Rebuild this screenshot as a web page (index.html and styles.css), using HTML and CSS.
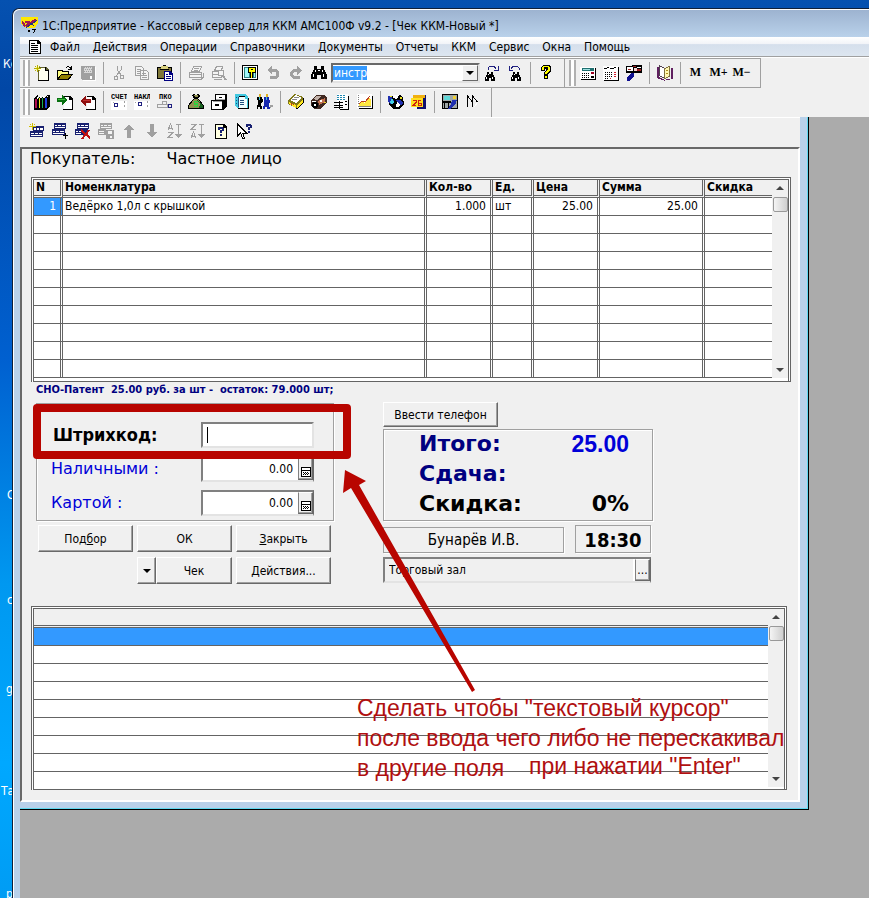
FILE: index.html
```html
<!DOCTYPE html>
<html lang="ru">
<head>
<meta charset="utf-8">
<title>1С:Предприятие - Кассовый сервер</title>
<link rel="stylesheet" href="styles.css">
</head>
<body>
<div class="desktop" aria-hidden="true">
  <span class="shortcut s1">Ко</span><span class="shortcut s2">С</span><span class="shortcut s3">с</span>
  <span class="shortcut s4">g</span><span class="shortcut s5">Та</span><span class="shortcut s6">р</span>
</div>
<div class="app">
  <header class="titlebar">
    <svg class="logo" viewBox="0 0 16 16"><path fill="#ffe800" d="M0 0h16v6l-3 4H5l-5-4z"/><path fill="none" stroke="#a01850" stroke-width="2" d="M1 4l3 5M4 5h3l-2 4 9-7"/><path fill="none" stroke="#203080" d="M5 10l10-7M9 6l3 2"/><path d="M7 12h1v2H7zM10 11h4v1l-2 3h-1l2-3h-3z"/></svg>
    <h1>1С:Предприятие - Кассовый сервер для ККМ АМС100Ф v9.2 - [Чек ККМ-Новый *]</h1>
  </header>
  <nav class="menu">
    <svg class="doc" viewBox="0 0 12 14"><path d="M0 0h9l3 3v11H0z"/><path fill="#fff" d="M1 1h7v3h3v9H1z"/><path d="M2 3h4v1H2zM2 5h7v1H2zM2 7h7v1H2zM2 9h7v1H2zM2 11h7v1H2z"/></svg>
    <a href="#">Файл</a><a href="#">Действия</a><a href="#">Операции</a><a href="#">Справочники</a><a href="#">Документы</a><a href="#">Отчеты</a><a href="#">ККМ</a><a href="#">Сервис</a><a href="#">Окна</a><a href="#">Помощь</a>
  </nav>
  <div class="toolbars">
    <div class="bar-row">
      <div class="bar">
        <i class="grip"></i>
        <button aria-label="Новый"><svg viewBox="0 0 16 16"><path fill="#606030" d="M4 2h8l3 3v10H4z"/><path d="M14 5h1v11H4v-1h10z"/><path fill="#fffff0" d="M5 3h6v3h3v9H5z"/><path fill="#b8b000" d="M3 0h1v7H3zM0 3h7v1H0zM1 1h1v1H1zM5 1h1v1H5zM1 5h1v1H1zM5 5h1v1H5z"/><path fill="#ffff60" d="M2 2h1v1H2zM4 2h1v1H4zM2 4h1v1H2zM4 4h1v1H4z"/><path d="M11 2h1v3h3v1h-4z"/></svg></button>
        <button aria-label="Открыть"><svg viewBox="0 0 16 16"><path d="M0 5h5l1 1h6v3h4l-4 6H0z"/><path fill="#ffff80" d="M1 6h3l1 1h6v2H4l-3 4z"/><path fill="#908000" d="M4 10h10l-3 4H2z"/><path fill="none" stroke="#000" d="M9 3c1-2 4-2 5 1M14 1v3h-3"/></svg></button>
        <button aria-label="Сохранить"><svg viewBox="0 0 16 16"><path fill="#a0a0a0" d="M1 1h14v14H2l-1-1z"/><path fill="#d8d8d8" d="M4 2h8v6H4z"/><path fill="#a0a0a0" d="M4 2h1v1H4zM6 2h1v1H6zM8 2h1v1H8zM10 2h1v1h-1zM5 4h1v1H5zM7 4h1v1H7zM9 4h1v1H9zM11 4h1v1h-1zM4 6h1v1H4zM6 6h1v1H6zM8 6h1v1H8zM10 6h1v1h-1z"/><path fill="#fff" d="M10 11h2v3h-2zM15 2h1v14H3v-1h12z"/></svg></button>
        <i class="sep"></i>
        <button aria-label="Вырезать"><svg viewBox="0 0 16 16"><path fill="none" stroke="#a0a0a0" d="M6 1v4l5 6M10 1v4l-5 6"/><circle cx="5" cy="13" r="2" fill="none" stroke="#a0a0a0"/><circle cx="11" cy="12" r="2" fill="none" stroke="#a0a0a0"/></svg></button>
        <button aria-label="Копировать"><svg viewBox="0 0 16 16"><path fill="#f4f4f4" stroke="#a0a0a0" d="M1.500 1.500h6l2 2v7h-8zM6.500 5.500h6l2 2v7h-8z"/><path fill="#a0a0a0" d="M3 4h4v1H3zM3 6h3v1H3zM3 8h3v1H3zM8 8h4v1H8zM8 10h5v1H8zM8 12h5v1H8z"/></svg></button>
        <button aria-label="Вставить"><svg viewBox="0 0 16 16"><path d="M0 2h15v12H0z"/><path fill="#807838" d="M1 3h13v10H1z"/><path fill="#d8d080" d="M4 1h7v3H4z"/><path d="M3 4h9v1H3zM6 0h3v1H6z"/><path fill="#000080" d="M7 6h6l3 3v7H7z"/><path fill="#fff" d="M8 7h4v3h3v5H8z"/><path fill="#000080" d="M9 9h2v1H9zM9 11h5v1H9zM9 13h5v1H9z"/></svg></button>
        <i class="sep"></i>
        <button aria-label="Печать"><svg viewBox="0 0 16 16"><path fill="#f4f4f4" stroke="#a0a0a0" d="M5.500 1.500h8l-2 5h-8zM1.500 7.500h12v5h-12z"/><path fill="none" stroke="#a0a0a0" d="M2 9.500h11M4 14.500h9l2-2v-5M6 3.500h5M6 5.500h4"/></svg></button>
        <button aria-label="Просмотр"><svg viewBox="0 0 16 16"><path fill="#f4f4f4" stroke="#a0a0a0" d="M5.500 1.500h6l-1 4h-7zM1.500 6.500h9v6h-9z"/><path fill="none" stroke="#a0a0a0" stroke-width="2" d="M12 11l3 4"/><circle cx="10" cy="8" r="3" fill="#f4f4f4" stroke="#a0a0a0"/><path stroke="#a0a0a0" d="M2 9.500h5M3 14.500h8"/></svg></button>
        <i class="sep"></i>
        <button aria-label="Параметры"><svg viewBox="0 0 16 16"><path d="M0 0h16v15H0z"/><path fill="#fff" d="M1 1h14v13H1z"/><path fill="#308080" d="M2 2h12v11H2z"/><path fill="#a0f8f8" d="M3 3h4v9H3zM12 8h1v4h-1z"/><path d="M6 2h8v6h-3v5H8V8H6z"/><path fill="#ffff00" d="M7 3h6v4h-3v6H9V7H7z"/><path d="M9 4h2v1H9z"/></svg></button>
        <button aria-label="Отменить"><svg viewBox="0 0 16 16"><path fill="#a0a0a0" d="M2 5l5-4v3h4l3 3v4l-3 3H5v-3h5l1-1V8l-1-1H7v3z"/></svg></button>
        <button aria-label="Вернуть"><svg viewBox="0 0 16 16"><path fill="#a0a0a0" d="M14 5L9 1v3H5L2 7v4l3 3h7v-3H6l-1-1V8l1-1h3v3z"/></svg></button>
        <button aria-label="Найти"><svg viewBox="0 0 16 16"><path d="M3 1h3v3h4V1h3v3l3 6v4h-6v-4H6v4H0v-4l3-6z"/><path fill="#fff" d="M4 5h1v2H4zM2 9h1v3H2zM11 5h1v2h-1zM12 9h1v3h-1zM7 5h2v1H7z"/></svg></button>
        <div class="combo"><input aria-label="Поиск" value="инстр"><button aria-label="Список"><i class="tri"></i></button></div>
        <button aria-label="Найти далее"><svg viewBox="0 0 16 16"><path d="M3 7h2v2h2V7h2v2l2 4v3H7v-3H5v3H1v-3l2-4z"/><path fill="#fff" d="M2 12h1v2H2zM8 12h1v2H8zM4 9h1v1H4z"/><path fill="none" stroke="#202080" d="M4 5V3l2-2h4l2 3M14 1v4h-4"/></svg></button>
        <button aria-label="Найти ранее"><svg viewBox="0 0 16 16"><path d="M6 7h2v2h2V7h2v2l2 4v3h-4v-3H8v3H4v-3l2-4z"/><path fill="#fff" d="M5 12h1v2H5zM11 12h1v2h-1zM7 9h1v1H7z"/><path fill="none" stroke="#202080" d="M12 5V3l-2-2H6L4 4M2 1v4h4"/></svg></button>
        <i class="sep"></i>
        <button aria-label="Справка"><svg viewBox="0 0 16 16"><path d="M5 0h6l2 2v4l-3 3v1H6V7l2-2V4H7v2H3V2zM6 10h4v4H6z"/><path fill="#ffff00" d="M5 1h5l2 2v2L9 8v1H7V7l3-3V3L9 2H6v3H4V2zM7 11h2v2H7z"/></svg></button>
      </div>
      <div class="bar bar-right">
        <i class="grip"></i>
        <button aria-label="Калькулятор"><svg viewBox="0 0 16 16"><path d="M1 3h15v12H1z"/><path fill="#fff" d="M0 2h15v12H0z"/><path fill="#207070" d="M2 3h12v3H2z"/><path fill="#a0e0e0" d="M3 4h7v1H3z"/><path d="M2 8h1v1H2zM4 8h1v1H4zM6 8h1v1H6zM8 8h1v1H8zM2 10h1v1H2zM4 10h1v1H4zM6 10h1v1H6zM8 10h1v1H8zM2 12h1v1H2zM4 12h1v1H4zM6 12h1v1H6zM8 12h1v1H8zM11 11h3v2h-3z"/><path fill="#a00020" d="M11 7h3v2h-3z"/></svg></button>
        <button aria-label="Календарь"><svg viewBox="0 0 16 16"><path d="M1 2h15v14H1z"/><path fill="#fff" d="M0 1h15v14H0z"/><path d="M1 3h3v1H1zM7 3h4v1H7zM4 2h2v1H4zM11 2h2v1h-2zM2 7h1v1H2zM4 7h1v1H4zM6 7h1v1H6zM8 7h1v1H8zM2 9h1v1H2zM4 9h1v1H4zM6 9h1v1H6zM8 9h1v1H8zM2 11h1v1H2zM4 11h1v1H4zM6 11h1v1H6zM8 11h1v1H8zM2 13h1v1H2zM4 13h1v1H4z"/><path fill="#d02030" d="M11 7h2v1h-2zM11 9h2v1h-2zM11 11h2v1h-2zM7 13h1v1H7z"/></svg></button>
        <button aria-label="Табло"><svg viewBox="0 0 16 16"><path d="M0 1h5l2-1h9v8H0z"/><path fill="#fff" d="M1 2h6v4H1zM11 2h4v1h-4z"/><path fill="#a02020" d="M2 4h3v1H2zM10 4h5v2h-5zM7 1h3v1H7z"/><path fill="#f8d0d0" d="M8 3h3v3H8z"/><path fill="#101090" d="M5 8h3v3l-5 5H1v-3z"/></svg></button>
        <i class="sep"></i>
        <button aria-label="Описание"><svg viewBox="0 0 16 16"><path fill="#602060" d="M0 2h2v10l6 3v1L0 13zM14 3h2v11l-7 1v-1h5z"/><path fill="#fff" stroke="#504050" d="M2.500.5l5 3v10l-5-3z"/><path fill="#fff8b0" stroke="#807040" d="M7.500 3.500l5-2v10l-5 2z"/><path fill="#b09020" d="M9 5h2v1H9zM9 8h2v1H9z"/></svg></button>
        <i class="sep"></i>
        <button class="mem">M</button><button class="mem">M+</button><button class="mem">M−</button>
      </div>
    </div>
    <div class="bar-row second">
      <div class="bar">
        <i class="grip"></i>
        <button aria-label="Журналы"><svg viewBox="0 0 16 16"><path d="M0 4l4-3v3l3-3v3l3-3v3l4-3h2v11l-3 4H0z"/><path fill="#b01050" d="M1 5h2v9H1z"/><path fill="#f0e820" d="M5 4h1v10H5z"/><path fill="#18b050" d="M8 4h1v10H8z"/><path fill="#2040e0" d="M11 4h2v10h-2z"/><path fill="#fff" d="M3 3h1v2H3zM6 2h1v2H6zM9 2h1v2H9zM13 2h1v1h-1z"/></svg></button>
        <button aria-label="Приход"><svg viewBox="0 0 16 16"><path d="M7 2h6l3 3v11H6v-1h9V6h-3V3H7z"/><path fill="#fff" d="M7 3h5v3h3v9H7z"/><path fill="#087010" d="M0 4h5V1l6 5-6 5V8H0z"/><path fill="#40c040" d="M1 5h7v1H1z"/></svg></button>
        <button aria-label="Расход"><svg viewBox="0 0 16 16"><path d="M7 2h6l3 3v11H6v-1h9V6h-3V3H7z"/><path fill="#fff" d="M7 3h5v3h3v9H7z"/><path fill="#901010" d="M11 5H6V2L0 7l6 5V9h5z"/><path fill="#c03030" d="M3 6h7v1H3z"/></svg></button>
        <i class="sep"></i>
        <button aria-label="Счет"><svg viewBox="0 0 16 16"><path fill="#fff" d="M0 7h16v9H0z"/><text class="tag" x="0" y="5">СЧЕТ</text><circle cx="5" cy="11" r="2" fill="none" stroke="#202080"/><path fill="#a0a0a0" d="M2 8h1v1H2zM13 7h1v2h-1zM13 11h1v2h-1z"/></svg></button>
        <button aria-label="Накладная"><svg viewBox="0 0 16 16"><path fill="#fff" d="M0 7h16v9H0z"/><text class="tag" x="0" y="5">НАКЛ</text><circle cx="6" cy="10" r="2" fill="none" stroke="#202080"/><path fill="#a0a0a0" d="M1 8h1v1H1zM13 7h1v2h-1zM13 11h1v2h-1z"/></svg></button>
        <button aria-label="ПКО"><svg viewBox="0 0 16 16"><text class="tag" x="2" y="5">ПКО</text><path fill="none" stroke="#a0a0a0" d="M5 10V7h4v3M0 13.500h10v-3H0z"/><circle cx="13" cy="12" r="2" fill="none" stroke="#202080"/></svg></button>
        <i class="sep"></i>
        <button aria-label="Касса"><svg viewBox="0 0 16 16"><path d="M4 1l2-1 2 1 2-1 2 2-2 3 3 2 3 5v3H0v-3l3-5 3-2z"/><path fill="#909050" d="M5 1h5v2H7zM6 5h3l3 3 3 4v2H1v-2l3-4z"/><path fill="#186020" d="M9 6l3 2 3 4v2h-4l1-4z"/><path fill="#30d040" d="M6 7h4v1H7v1h3v4H6v-1h3v-1H6z"/></svg></button>
        <button aria-label="Картотека"><svg viewBox="0 0 16 16"><path d="M4 0h12v12l-3 4H0V6h4z"/><path fill="#fff" d="M5 1h9v5H5zM1 7h10v8H1z"/><path fill="#a0a0a0" d="M2 7h9v1H2zM5 5h9v1H5z"/><path d="M8 3h3v1H8zM4 10h4v2H4z"/></svg></button>
        <button aria-label="Документ"><svg viewBox="0 0 16 16"><path fill="#40c8e0" d="M1 0h10l3 3v11H3l-2-2z"/><path fill="#000" d="M14 4h1v11H4v-1h10zM5 2h6v1H5z"/><path fill="#f0ffff" d="M5 3h6v2h2v9H5z"/><path fill="#205080" d="M4 3h1v10H4zM2 3h1v1H2zM2 6h1v1H2zM2 9h1v1H2zM6 6h4v1H6zM6 8h4v1H6zM6 10h4v1H6z"/></svg></button>
        <button aria-label="Контрагенты"><svg viewBox="0 0 16 16"><path fill="#e0b020" d="M2 0h2v3H2zM9 0h2v3H9z"/><path d="M0 3h5l1 4-2 2 1 6H3l-1-4-1 4H0l1-7z"/><path fill="#1828b0" d="M7 3h5l1 5-1 3 1 4h-3l-1-4-1 4H6l1-6z"/><path fill="#fff" d="M6 5h1v3H6z"/><path fill="#40c0d0" d="M2 3h1v3H2zM9 3h1v3H9z"/><path fill="#a0a0a0" d="M13 11h3v2h-2v1h-1z"/></svg></button>
        <i class="sep"></i>
        <button aria-label="Картотека товаров"><svg viewBox="0 0 16 16"><path d="M13 5l3-1v4l-7 7-2-1z"/><path fill="#807818" d="M0 6l7-6 8 3v4l-7 7-8-4z"/><path fill="#fff" d="M2 6l6-5 6 3-6 5z"/><path fill="#ffe820" d="M1 8l7 3v3l-7-4zM9 11l6-6v3l-6 6z"/><path fill="#888" d="M4 5h5v1H4zM6 3h5v1H6z"/><path fill="#c03020" d="M3 9h1v2H3zM4 11h1v-1h1v1z"/></svg></button>
        <button aria-label="Товары"><svg viewBox="0 0 16 16"><path fill="#402820" d="M0 6l6-5h7l3 3v5l-4 3-3 3H3l-3-3z"/><path fill="#c0b0a8" d="M2 5l4-3h5L6 6z"/><path fill="#c07050" d="M7 7l7-3v4l-6 3z"/><path fill="#fff" d="M1 7h4v1H1zM9 6h2v2H9z"/><circle cx="4" cy="11" r="3"/><circle cx="4" cy="11" r="1" fill="#fff"/><path fill="#e8d020" d="M13 8h2v1h-2z"/></svg></button>
        <button aria-label="Отчет"><svg viewBox="0 0 16 16"><path d="M14 2h1v14H6v-1h8z"/><path fill="#fff" d="M3 0h11v15H3z"/><path fill="#2088b0" d="M3 1h2v1H3zM6 1h2v1H6zM9 1h2v1H9zM3 3h2v1H3zM6 3h2v1H6zM9 3h2v1H9zM3 5h2v1H3zM6 5h2v1H6zM9 5h2v1H9z"/><path d="M0 8h9v1H0zM0 11h9v1H0zM0 13h9v1H0zM5 7h1v8H5zM11 7h2v1h-2zM11 10h2v1h-2z"/></svg></button>
        <button aria-label="Диаграмма"><svg viewBox="0 0 16 16"><path d="M2 2h14v13H2z"/><path fill="#fff" d="M0 0h15v14H0z"/><path fill="#ffe840" d="M2 10l3-2 3 1 4-5 2 1v8H2z"/><path fill="none" stroke="#c04020" d="M2 10l3-3 3 1 5-6"/><path fill="#808080" d="M1 1h1v1H1zM1 3h1v1H1zM1 5h1v1H1zM1 7h1v1H1zM1 9h1v1H1zM1 12h13v1H1z"/></svg></button>
        <i class="sep"></i>
        <button aria-label="Интернет"><svg viewBox="0 0 16 16"><path d="M5 1h7l3 3 1 6-4 5H5l-4-4V5z"/><path fill="#fff" d="M5 1h6l-2 4-4-1zM9 8l4 1-2 4H8z"/><path fill="#2030b0" d="M0 2h3l3 5-3 4-3-3zM7 6h5l3 3-2 3-4-4z"/><path fill="#40d0e8" d="M3 5h2l1 3-2 3-2-2z"/><path fill="#e8e020" d="M12 3h2v2h-2zM2 2h2v1H2z"/></svg></button>
        <button aria-label="Дата"><svg viewBox="0 0 16 16"><path fill="#101070" d="M3 1h12v14H6v-2H3z"/><path fill="#ffe020" d="M0 4h12v9H0z"/><path fill="#f0b010" d="M2 1h12v3H2z"/><path fill="none" stroke="#d02010" d="M2 6.500h3v2l-3 3h3M10 6.500H7.500v5H10v-2H8"/></svg></button>
        <i class="sep"></i>
        <button aria-label="Рабочее место"><svg viewBox="0 0 16 16"><path d="M0 0h16v15H0z"/><path fill="#a0a8a8" d="M1 1h14v13H1z"/><path fill="#60d8d8" d="M2 2h6v4H2z"/><path d="M0 7h9v2H0zM2 9h1v6H2zM6 9h1v5H6z"/><path fill="#2030b0" d="M10 6h5l-2 5-5 4H6l3-5z"/><path fill="#f0d030" d="M11 2h3v3h-3z"/></svg></button>
        <button aria-label="Далее"><svg viewBox="0 0 16 16"><path fill="none" stroke="#000" d="M2.500 13V2l5 6M7.500 13V2l5 6"/><path fill="none" stroke="#fff" d="M13 8l-4 5"/></svg></button>
      </div>
    </div>
  </div>

  <main class="mdi">
    <section class="child">
      <div class="child-tools">
        <button aria-label="Новая строка"><svg viewBox="0 0 16 16"><path fill="#182070" d="M4 3h11v5H4zM1 8h13v6H1z"/><path fill="#fff" d="M5 5h2v2H5zM8 5h2v2H8zM11 5h3v2h-3zM2 10h3v1H2zM6 10h3v1H6zM10 10h3v1h-3zM2 12h11v1H2z"/><path fill="#d0c000" d="M0 3h7v1H0zM3 0h1v7H3zM1 1h1v1H1zM5 1h1v1H5z"/></svg></button>
        <button aria-label="Добавить строку"><svg viewBox="0 0 16 16"><path fill="#182070" d="M2 0h12v6H2zM0 6h13v6H0z"/><path fill="#fff" d="M3 2h2v1H3zM6 2h3v1H6zM10 2h3v1h-3zM3 4h10v1H3zM1 8h2v1H1zM4 8h3v1H4zM8 8h4v1H8zM1 10h11v1H1z"/><path d="M13 10h1v6h-1zM11 12h5v1h-5z"/></svg></button>
        <button aria-label="Удалить строку"><svg viewBox="0 0 16 16"><path fill="#182070" d="M2 0h12v6H2zM0 6h13v6H0z"/><path fill="#fff" d="M3 2h2v1H3zM6 2h3v1H6zM10 2h3v1h-3zM3 4h10v1H3zM1 8h2v1H1zM4 8h3v1H4zM1 10h5v1H1z"/><path fill="none" stroke="#c01010" stroke-width="2" d="M6 7l9 8M14 7l-7 9"/></svg></button>
        <button aria-label="Записать строку"><svg viewBox="0 0 16 16"><path fill="#a0a0a0" d="M2 0h12v6H2zM0 6h8v6H0zM8 7h8v9H8z"/><path fill="#f4f4f4" d="M3 2h2v1H3zM6 2h3v1H6zM10 2h3v1h-3zM3 4h10v1H3zM1 8h5v1H1zM1 10h5v1H1zM10 8h4v3h-4zM12 13h2v2h-2z"/></svg></button>
        <button aria-label="Вверх"><svg viewBox="0 0 16 16"><path fill="#a0a0a0" d="M8 1l5 6h-3v8H6V7H3z"/></svg></button>
        <button aria-label="Вниз"><svg viewBox="0 0 16 16"><path fill="#a0a0a0" d="M8 15l5-6h-3V1H6v8H3z"/></svg></button>
        <button aria-label="По возрастанию"><svg viewBox="0 0 16 16"><path fill="none" stroke="#a0a0a0" d="M1 7l2.500-6L6 7M2 5h3M1 9.500h5L1 14.500h5M11.500 1v11M9 1.500h5"/><path fill="#a0a0a0" d="M8 11h7l-3 4h-1z"/></svg></button>
        <button aria-label="По убыванию"><svg viewBox="0 0 16 16"><path fill="none" stroke="#a0a0a0" d="M1 1.500h5L1 6.500h5M1 15l2.500-6L6 15M2 13h3M11.500 1v11M9 1.500h5"/><path fill="#a0a0a0" d="M8 11h7l-3 4h-1z"/></svg></button>
        <button aria-label="Описание"><svg viewBox="0 0 16 16"><path d="M2 1h9l3 3v12H2z"/><path fill="#ffffe0" d="M3 2h7v3h3v10H3z"/><path fill="#182070" d="M5 4h5v1h1v3H9v2H7V7h2V6H7v1H5zM7 11h2v2H7z"/></svg></button>
        <button aria-label="Помощь"><svg viewBox="0 0 16 16"><path fill="#fff" stroke="#000" d="M1.500 1v12l3-3 2 5h2l-2-5h4z"/><path fill="#182070" d="M10 1h5v1h1v3h-2v2h-2V4h2V3h-2v1h-2zM12 8h2v2h-2z"/></svg></button>
      </div>

      <div class="pane">
        <div class="buyer"><span>Покупатель:</span><span>Частное лицо</span></div>

        <div class="grid">
          <table class="items">
            <colgroup><col class="c-n"><col><col class="c-q"><col class="c-u"><col class="c-p"><col class="c-s"><col class="c-d"></colgroup>
            <thead><tr><th>N</th><th>Номенклатура</th><th>Кол-во</th><th>Ед.</th><th>Цена</th><th>Сумма</th><th>Скидка</th></tr></thead>
            <tbody>
              <tr><td class="num sel">1</td><td>Ведёрко 1,0л с крышкой</td><td class="num">1.000</td><td>шт</td><td class="num">25.00</td><td class="num">25.00</td><td></td></tr>
              <tr><td></td><td></td><td></td><td></td><td></td><td></td><td></td></tr>
              <tr><td></td><td></td><td></td><td></td><td></td><td></td><td></td></tr>
              <tr><td></td><td></td><td></td><td></td><td></td><td></td><td></td></tr>
              <tr><td></td><td></td><td></td><td></td><td></td><td></td><td></td></tr>
              <tr><td></td><td></td><td></td><td></td><td></td><td></td><td></td></tr>
              <tr><td></td><td></td><td></td><td></td><td></td><td></td><td></td></tr>
              <tr><td></td><td></td><td></td><td></td><td></td><td></td><td></td></tr>
              <tr><td></td><td></td><td></td><td></td><td></td><td></td><td></td></tr>
              <tr><td></td><td></td><td></td><td></td><td></td><td></td><td></td></tr>
            </tbody>
          </table>
          <div class="scroll"><i class="up"></i><i class="thumb"></i><i class="down"></i></div>
        </div>

        <p class="info">СНО-Патент&nbsp; 25.00 руб. за шт -&nbsp; остаток: 79.000 шт;</p>

        <form class="form">
          <div class="left">
            <div class="payment">
              <label class="code" for="code">Штрихкод:</label>
              <input class="field caret" id="code" type="text">
              <label for="cash">Наличными :</label>
              <div class="field calc"><input id="cash" type="text" value="0.00"><button type="button" aria-label="Калькулятор"><svg viewBox="0 0 10 10"><path d="M0 0h10v10H0z"/><path fill="#fff" d="M1 1h8v2H1zM1 4h8v5H1z"/><path d="M2 5h1v1H2zM4 5h1v1H4zM6 5h1v1H6zM3 6h1v1H3zM5 6h1v1H5zM7 6h1v1H7zM2 7h1v1H2zM4 7h1v1H4zM6 7h1v1H6z"/></svg></button></div>
              <label for="card">Картой :</label>
              <div class="field calc"><input id="card" type="text" value="0.00"><button type="button" aria-label="Калькулятор"><svg viewBox="0 0 10 10"><path d="M0 0h10v10H0z"/><path fill="#fff" d="M1 1h8v2H1zM1 4h8v5H1z"/><path d="M2 5h1v1H2zM4 5h1v1H4zM6 5h1v1H6zM3 6h1v1H3zM5 6h1v1H5zM7 6h1v1H7zM2 7h1v1H2zM4 7h1v1H4zM6 7h1v1H6z"/></svg></button></div>
            </div>
            <div class="actions">
              <button class="btn" type="button"><span>Под<u>б</u>ор</span></button>
              <button class="btn" type="button">ОК</button>
              <button class="btn" type="button"><span><u>З</u>акрыть</span></button>
              <div class="split"><button class="btn" type="button" aria-label="Список"><i class="tri"></i></button><button class="btn" type="button">Чек</button></div>
              <button class="btn" type="button">Действия...</button>
            </div>
          </div>
          <div class="right">
            <button class="btn phone" type="button">Ввести телефон</button>
            <dl class="totals">
              <dt>Итого:</dt><dd class="sum">25.00</dd>
              <dt>Сдача:</dt><dd></dd>
              <dt class="black">Скидка:</dt><dd>0%</dd>
            </dl>
            <div class="who"><span class="cashier">Бунарёв И.В.</span><time class="clock">18:30</time></div>
            <div class="field place"><input type="text" aria-label="Место" value="Торговый зал"><button type="button" aria-label="Выбрать">...</button></div>
          </div>
        </form>

        <div class="grid log-grid">
          <table class="log">
            <thead><tr><th></th></tr></thead>
            <tbody><tr><td class="sel"></td></tr><tr><td></td></tr><tr><td></td></tr><tr><td></td></tr><tr><td></td></tr><tr><td></td></tr><tr><td></td></tr><tr><td></td></tr><tr class="last"><td></td></tr></tbody>
          </table>
          <div class="scroll"><i class="up"></i><i class="thumb"></i><i class="down"></i></div>
        </div>

        <div class="note-frame"></div>
        <svg class="note-arrow" viewBox="0 0 134 224"><path fill="#b80500" d="M3 0l21 11-7 4 116 205-3 2L9 18l-8 5z"/></svg>
        <p class="note">Сделать чтобы "текстовый курсор"<br>после ввода чего либо не перескакивал<br>в другие поля</p>
        <p class="note note-end">при нажатии "Enter"</p>
      </div>
    </section>
  </main>
</div>
</body>
</html>
```
FILE: styles.css
```css
* { box-sizing: border-box; }
body {
  margin: 0;
  min-height: 100vh;
  display: flex;
  overflow: hidden;
  position: relative;
  background: linear-gradient(#0551b0 0, #0147a6 10%, #0060d0 40%, #0098f0 65%, #00a8ff 85%, #009cf4 100%);
  font: 12px/16px "DejaVu Sans Condensed", "DejaVu Sans", sans-serif;
  color: #000;
}
svg { display: block; shape-rendering: crispEdges; }
button, input { font: inherit; color: inherit; margin: 0; padding: 0; border: 0; border-radius: 0; background: none; }
i { display: block; }
p, h1, dl, dd { margin: 0; }

.desktop { position: absolute; inset: 0 auto 0 0; width: 12px; overflow: hidden; color: #fff; }
.shortcut { position: absolute; left: 7px; }
.s1 { top: 56px; left: 3px; }
.s2 { top: 487px; }
.s3 { top: 592px; }
.s4 { top: 681px; left: 6px; }
.s5 { top: 783px; left: 1px; }
.s6 { top: 886px; left: 6px; }

.app {
  flex: 1;
  min-width: 0;
  position: relative;
  margin: 8px 0 0 12px;
  border-left: 1px solid #102038;
  border-top: 1px solid #102038;
  border-radius: 7px 0 0 0;
  box-shadow: inset 1px 1px #fff;
  background: #b9d1ea;
  padding-left: 7px;
  display: flex;
  flex-direction: column;
  overflow: hidden;
}
.titlebar { height: 28px; margin-left: -6px; padding: 4px 0 0 7px; display: flex; align-items: center; gap: 4px; background: linear-gradient(#9db3d0, #b9d1ea); border-top: 1px solid #fff; border-radius: 6px 0 0 0; }
.titlebar h1 { font-size: 12px; font-weight: 400; white-space: nowrap; }
.logo { width: 17px; height: 17px; }

.menu { height: 20px; padding-left: 9px; display: flex; align-items: center; gap: 13px; background: linear-gradient(#fff 0, #f2f4f8 35%, #d5dfec 40%, #dde6f0 100%); border-bottom: 1px solid #a0a0a0; }
.menu a { color: #000; text-decoration: none; font-size: 12px; white-space: nowrap; }
.menu a:first-of-type { margin-left: -4px; }
.doc { width: 12px; height: 14px; }

.toolbars { height: 60px; background: #f0f0f0; border-top: 1px solid #fff; }
.bar-row { display: flex; height: 30px; }
.bar { height: 30px; display: flex; align-items: center; padding: 0 7px 1px 3px; border-right: 1px solid #a0a0a0; border-bottom: 1px solid #a0a0a0; border-top: 1px solid #a0a0a0; }
.second .bar { border-top: 0; border-bottom: 0; box-shadow: inset 0 1px #fff; }
.second { height: 29px; }
.second .bar { height: 29px; padding-bottom: 2px; }
.bar-right { padding-left: 4px; }
.bar button, .child-tools button { width: 23px; height: 24px; flex: none; display: grid; place-items: center; }
.bar button svg, .child-tools svg { width: 16px; height: 16px; }
.grip { width: 7px; height: 26px; border-left: 2px solid #b0b0b0; border-right: 2px solid #b0b0b0; background: #fff; background-clip: padding-box; }
.sep { width: 8px; height: 22px; flex: none; background: linear-gradient(#a0a0a0, #a0a0a0) 4px 0 / 1px 100% no-repeat; }
.tag { font: 700 7px "Liberation Mono", monospace; }
.bar .mem { font: 700 12px "Liberation Serif", serif; }
.bar .combo { width: 149px; height: 20px; margin-left: 1px; display: flex; border: 2px solid; border-color: #696969 #e3e3e3 #e3e3e3 #696969; background: #fff; }
.combo input { flex: 1; min-width: 0; padding-left: 1px; color: #fff; background: linear-gradient(#39f, #39f) 0 1px / 34px 14px no-repeat; }
.bar .combo button { width: 16px; height: 16px; }
.combo button, .calc button, .place button { background: #f0f0f0; border: 1px solid; border-color: #fff #696969 #696969 #fff; }
.tri { border: 4px solid transparent; border-top-color: #000; border-bottom: 0; }

.mdi { flex: 1; background: #ababab; padding-right: 60px; }
.child { background: #b9d1ea; border: 1px solid #000; border-width: 0 1px 1px 0; box-shadow: inset -1px -1px #60d8f0; padding: 0 8px 7px 0; }
.child-tools { height: 30px; padding: 0 5px 3px; display: flex; align-items: center; background: #f0f0f0; border-top: 1px solid #fff; }
.pane { position: relative; background: #f0f0f0; border: 2px solid; border-color: #696969 #fff #fff #696969; padding: 0 7px 10px 9px; }
.buyer { height: 28px; margin-left: -1px; display: flex; gap: 31px; font: 16px/20px "DejaVu Sans", sans-serif; }

.grid { display: flex; border: 3px double #646464; border-bottom: 1px solid #646464; padding-bottom: 3px; background: #fff; }
.grid table { flex: 1; min-width: 0; table-layout: fixed; border-collapse: separate; border-spacing: 0; }
.grid th { height: 18px; padding: 0 2px; text-align: left; font: 700 12px/15px "DejaVu Sans Condensed", sans-serif; background: #f0f0f0; border-bottom: 3px double #646464; }
.grid td { height: 18px; padding: 0 2px; line-height: 17px; border-bottom: 1px solid #646464; }
.items th, .items td { border-right: 3px double #646464; white-space: nowrap; }
.items th:last-child, .items td:last-child { border-right: 0; }
.items .num { text-align: right; padding-right: 4px; }
.grid .sel { background: #39f; color: #fff; }
.c-n { width: 29px; }
.c-q { width: 66px; }
.c-u { width: 41px; }
.c-p { width: 66px; }
.c-s { width: 105px; }
.c-d { width: 67px; }
.scroll { width: 16px; display: flex; flex-direction: column; align-items: center; background: #f0f0f0; }
.up { margin-top: 6px; border: 4px solid transparent; border-top: 0; border-bottom-color: #444; }
.down { margin: auto 0 6px; border: 4px solid transparent; border-bottom: 0; border-top-color: #444; }
.thumb { width: 15px; height: 15px; margin-top: 7px; border: 1px solid #999; border-radius: 2px; background: linear-gradient(90deg, #f4f4f4, #cfcfcf); }

.info { height: 21px; padding-left: 5px; line-height: 16px; font-weight: 700; font-size: 11px; color: #000080; }
.form { display: flex; gap: 49px; margin: 0 0 22px 5px; }
.left { width: 298px; }
.payment { border: 1px solid #a0a0a0; box-shadow: inset 1px 1px #fff, 1px 1px #fff; padding: 18px 19px 4px 14px; display: grid; grid-template-columns: 1fr 113px; gap: 8px 0; align-items: center; font: 16px/20px "DejaVu Sans", sans-serif; color: #0000d8; }
.payment .code { font: 700 18px/20px "DejaVu Sans Condensed", sans-serif; color: #000; padding-left: 2px; }
.field { height: 26px; border: 2px solid; border-color: #808080 #e3e3e3 #e3e3e3 #808080; background: #fff; color: #000; font: 12px/16px "DejaVu Sans Condensed", sans-serif; min-width: 0; }
.caret { background: linear-gradient(#000, #000) 4px 3px / 1px 16px no-repeat, #fff; }
.field.calc, .field.place { display: flex; border-right: 1px solid #696969; }
.calc input { flex: 1; min-width: 0; text-align: right; padding-right: 5px; }
.calc button, .place button { box-shadow: inset -1px -1px #a0a0a0; border-left: 1px solid #808080; }
.calc button { width: 15px; display: grid; place-items: end center; padding-bottom: 2px; }
.calc svg { width: 10px; height: 10px; }
.actions { display: grid; grid-template-columns: repeat(3, 95px); gap: 5px 4px; margin: 4px 0 0 2px; }
.btn { height: 27px; display: grid; place-items: center; background: #f0f0f0; border: 1px solid; border-color: #fff #696969 #696969 #fff; box-shadow: inset -1px -1px #a0a0a0; }
.split { grid-column: 2; display: flex; }
.split .btn:first-child { width: 19px; }
.split .btn:last-child { flex: 1; }
.right { width: 270px; }
.phone { width: 115px; height: 25px; margin-top: -1px; }
.totals { margin-top: 2px; border: 1px solid #a0a0a0; box-shadow: inset 1px 1px #fff, 1px 1px #fff; padding: 0 23px 0 35px; display: grid; grid-template-columns: 1fr auto; font: 700 22px/30px "DejaVu Sans", sans-serif; color: #000080; }
.totals dt, .totals dd { height: 30px; line-height: 28px; }
.totals dd { color: #000; text-align: right; }
.totals .black { color: #000; }
.totals .sum { color: #0000d8; font: 700 23px/28px "Liberation Sans", sans-serif; }
.who { display: flex; align-items: flex-end; gap: 11px; margin-top: 4px; }
.cashier, .clock { border: 1px solid #a0a0a0; box-shadow: 1px 1px #fff; text-align: center; }
.cashier { width: 181px; height: 26px; font-size: 15px; line-height: 24px; }
.clock { width: 76px; height: 28px; font-size: 20px; line-height: 28px; font-weight: 700; }
.place { width: 268px; margin-top: 4px; }
.place input { flex: 1; min-width: 0; padding-left: 4px; background: #f0f0f0; border-right: 2px solid #fff; }
.place button { width: 15px; }

.log-grid { margin-right: 4px; padding-bottom: 2px; }
.log th { height: 19px; }
.log .last td { height: 15px; border-bottom: 0; }

/* Review marks laid over the form */
.note-frame { position: absolute; left: 11px; top: 255px; width: 318px; height: 55px; border: 8px solid #b80500; border-radius: 4px; }
.note-arrow { position: absolute; left: 320px; top: 321px; width: 134px; height: 224px; shape-rendering: auto; }
.note { position: absolute; left: 335px; top: 544px; font: 23px/30px "Liberation Sans", sans-serif; color: #b01010; white-space: nowrap; }
.note-end { left: 507px; top: 602px; }
```
